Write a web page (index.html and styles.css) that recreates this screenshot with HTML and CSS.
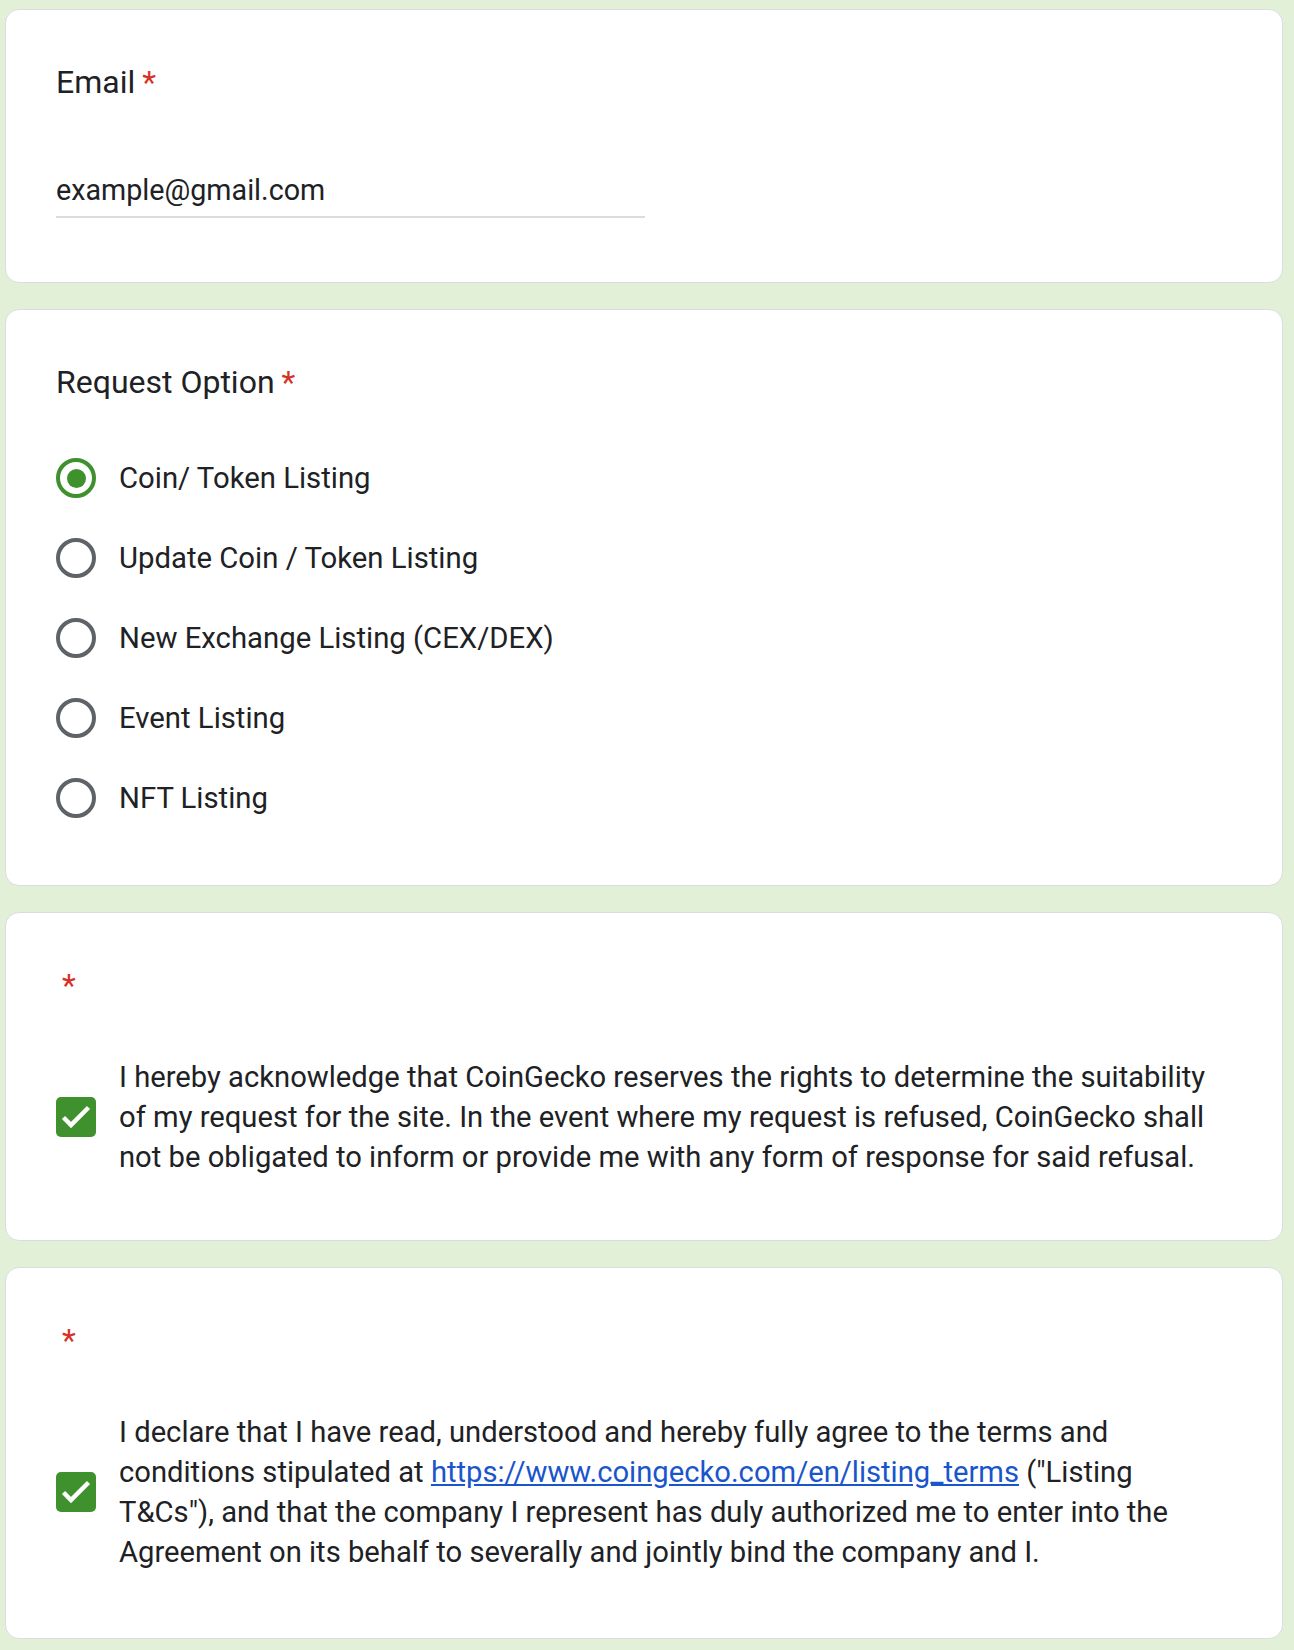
FILE: index.html
```html
<!DOCTYPE html>
<html>
<head>
<meta charset="utf-8">
<link rel="stylesheet" href="styles.css">
</head>
<body>
<div class="page">
  <div class="card card-email">
    <div class="q-title">Email<span class="req">*</span></div>
    <div class="text-input">example@gmail.com</div>
  </div>

  <div class="card card-options">
    <div class="q-title">Request Option<span class="req">*</span></div>
    <div class="options">
      <div class="opt">
        <span class="radio checked"><span class="dot"></span></span>
        <span class="opt-label">Coin/ Token Listing</span>
      </div>
      <div class="opt">
        <span class="radio"></span>
        <span class="opt-label">Update Coin / Token Listing</span>
      </div>
      <div class="opt">
        <span class="radio"></span>
        <span class="opt-label">New Exchange Listing (CEX/DEX)</span>
      </div>
      <div class="opt">
        <span class="radio"></span>
        <span class="opt-label">Event Listing</span>
      </div>
      <div class="opt">
        <span class="radio"></span>
        <span class="opt-label">NFT Listing</span>
      </div>
    </div>
  </div>

  <div class="card card-check">
    <div class="q-title"><span class="req">*</span></div>
    <div class="check-row">
      <span class="checkbox"><svg viewBox="0 0 40 40" width="40" height="40"><path d="M7.5 20.5 L15 28 L32.5 10.5" fill="none" stroke="#fff" stroke-width="4.5"/></svg></span>
      <div class="check-label">I hereby acknowledge that CoinGecko reserves the rights to determine the suitability of my request for the site. In the event where my request is refused, CoinGecko shall not be obligated to inform or provide me with any form of response for said refusal.</div>
    </div>
  </div>

  <div class="card card-check card-last">
    <div class="q-title"><span class="req">*</span></div>
    <div class="check-row">
      <span class="checkbox"><svg viewBox="0 0 40 40" width="40" height="40"><path d="M7.5 20.5 L15 28 L32.5 10.5" fill="none" stroke="#fff" stroke-width="4.5"/></svg></span>
      <div class="check-label">I declare that I have read, understood and hereby fully agree to the terms and conditions stipulated at <a href="#">https://www.coingecko.com/en/listing_terms</a> ("Listing T&amp;Cs"), and that the company I represent has duly authorized me to enter into the Agreement on its behalf to severally and jointly bind the company and I.</div>
    </div>
  </div>
</div>
</body>
</html>
```

FILE: styles.css
```css
html, body {
  margin: 0;
  padding: 0;
  background: #e1f0d6;
}
body {
  font-family: Roboto, "Liberation Sans", Arial, sans-serif;
  color: #202124;
}
.page {
  padding: 9px 11px 0 5px;
  display: flex;
  flex-direction: column;
  gap: 26px;
}
.card {
  background: #fff;
  border: 1px solid #dadce0;
  border-radius: 14px;
  padding: 52px 50px 0 50px;
}
.q-title {
  font-size: 32px;
  line-height: 40px;
  height: 40px;
}
.req {
  color: #d93025;
  padding-left: 7px;
}
.card-check .req {
  padding-left: 6px;
}
.card-email {
  padding-bottom: 64px;
}
.text-input {
  margin-top: 68px;
  width: 589px;
  font-size: 28.7px;
  line-height: 40px;
  padding-bottom: 6px;
  border-bottom: 2px solid #dadce0;
}
.options {
  margin-top: 36px;
  padding-bottom: 47px;
}
.opt {
  height: 80px;
  display: flex;
  align-items: center;
}
.radio {
  box-sizing: border-box;
  width: 40px;
  height: 40px;
  border-radius: 50%;
  border: 4px solid #5f6368;
  display: flex;
  align-items: center;
  justify-content: center;
  flex: none;
}
.radio.checked {
  border-color: #3f912d;
}
.dot {
  width: 19px;
  height: 19px;
  border-radius: 50%;
  background: #3f912d;
}
.opt-label {
  margin-left: 23px;
  font-size: 29.3px;
  line-height: 40px;
}
.check-row {
  margin-top: 52px;
  display: flex;
  align-items: center;
  padding-bottom: 63px;
}
.card-last .check-row {
  padding-bottom: 66px;
}
.checkbox {
  flex: none;
  width: 40px;
  height: 40px;
  border-radius: 5px;
  background: #3f912d;
  display: flex;
}
.check-label {
  margin-left: 23px;
  font-size: 29.2px;
  line-height: 40px;
}
.check-label a {
  color: #1a55cc;
  text-decoration: underline;
}
```
